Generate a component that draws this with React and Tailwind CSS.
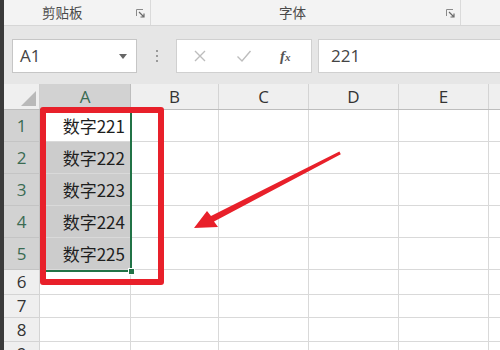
import React from 'react';

const cjk = { fontFamily: '"Noto Sans CJK SC", "Noto Sans", sans-serif' };

const cols = [
  { name: 'A', w: 'w-[91px]' },
  { name: 'B', w: 'w-[88px]' },
  { name: 'C', w: 'w-[90px]' },
  { name: 'D', w: 'w-[90px]' },
  { name: 'E', w: 'w-[90px]' },
];

const rows = [
  { n: 1, h: 'h-[32px]', text: '数字221', sel: true, active: true },
  { n: 2, h: 'h-[32px]', text: '数字222', sel: true },
  { n: 3, h: 'h-[32px]', text: '数字223', sel: true },
  { n: 4, h: 'h-[32px]', text: '数字224', sel: true },
  { n: 5, h: 'h-[32px]', text: '数字225', sel: true },
  { n: 6, h: 'h-[25px]' },
  { n: 7, h: 'h-[23px]' },
  { n: 8, h: 'h-[24px]' },
  { n: 9, h: 'h-[24px]' },
];

// little dialog launcher in the ribbon group labels
const Launcher = () => (
  <svg width="9" height="9" viewBox="0 0 9 9" className="shrink-0">
    <path d="M0.5 7V0.5H7" fill="none" stroke="#8a8a8a" strokeWidth="1" />
    <path d="M3 3L8 8M8 4.5V8H4.5" fill="none" stroke="#6a6a6a" strokeWidth="1.2" />
  </svg>
);

const App = () => {
  return (
    <div className="relative w-[500px] h-[350px] overflow-hidden flex bg-white" style={cjk}>
      {/* dark window edge */}
      <div className="w-[4px] shrink-0 bg-[#3a3a3a]" />

      <div className="flex-1 flex flex-col min-w-0">
        {/* ribbon group labels */}
        <div className="h-[26px] shrink-0 flex bg-[#f3f3f3] border-b border-[#d6d6d6]">
          <div className="w-[147px] flex items-center border-r border-[#dadada]">
            <span className="pl-[38px] text-[13.5px] text-[#4a4a4a]">剪贴板</span>
            <span className="ml-auto mr-[5px] mt-[2px]"><Launcher /></span>
          </div>
          <div className="w-[310px] flex items-center border-r border-[#dadada]">
            <span className="pl-[128px] text-[13.5px] text-[#4a4a4a]">字体</span>
            <span className="ml-auto mr-[5px] mt-[2px]"><Launcher /></span>
          </div>
        </div>

        {/* formula bar */}
        <div className="h-[58px] shrink-0 flex items-start pt-[13px] bg-[#e6e6e6]">
          <div className="ml-[8px] w-[125px] h-[34px] bg-white border border-[#c6c6c6] flex items-center">
            <span className="pl-[7px] text-[17px] text-[#444]" style={{ fontFamily: '"Open Sans", sans-serif' }}>A1</span>
            <span className="ml-auto mr-[9px] w-0 h-0 border-l-[4px] border-r-[4px] border-t-[5px] border-l-transparent border-r-transparent border-t-[#666]" />
          </div>
          <div className="w-[39px] h-[34px] flex flex-col items-center justify-center gap-[3px]">
            <span className="w-[2px] h-[2px] bg-[#9a9a9a]" />
            <span className="w-[2px] h-[2px] bg-[#9a9a9a]" />
            <span className="w-[2px] h-[2px] bg-[#9a9a9a]" />
          </div>
          <div className="w-[136px] h-[34px] bg-white border border-[#d0d0d0] flex items-center">
            <svg width="14" height="14" viewBox="0 0 14 14" className="ml-[16px]">
              <path d="M2 2L12 12M12 2L2 12" stroke="#bdbdbd" strokeWidth="1.4" />
            </svg>
            <svg width="16" height="14" viewBox="0 0 16 14" className="ml-[29px]">
              <path d="M1.5 7.5L6 12L14.5 2" fill="none" stroke="#bdbdbd" strokeWidth="1.4" />
            </svg>
            <span className="ml-[28px] text-[15px] italic font-bold text-[#555]" style={{ fontFamily: '"Liberation Serif", serif' }}>
              f<span className="text-[11px]">x</span>
            </span>
          </div>
          <div className="ml-[6px] flex-1 h-[34px] bg-white border-y border-l border-[#d0d0d0] flex items-center">
            <span className="pl-[12px] text-[17px] text-[#444]" style={{ fontFamily: '"Open Sans", sans-serif' }}>221</span>
          </div>
        </div>

        {/* sheet */}
        <div className="flex-1 flex flex-col">
          {/* column headers */}
          <div className="h-[26px] shrink-0 flex bg-[#efefef] border-b border-[#bdbdbd]">
            <div className="w-[36px] shrink-0 flex items-end justify-end pr-[3px] pb-[3px] border-r border-[#cfcfcf]">
              <svg width="15" height="15" viewBox="0 0 15 15">
                <polygon points="15,0 15,15 0,15" fill="#b9b9b9" />
              </svg>
            </div>
            {cols.map((c) => (
              <div
                key={c.name}
                className={`${c.w} shrink-0 flex items-center justify-center border-r text-[17px] ${
                  c.name === 'A' ? 'bg-[#d2d2d2] text-[#3a6b52] border-[#bdbdbd]' : 'text-[#333] border-[#d4d4d4]'
                }`}
                style={{ fontFamily: '"Open Sans", sans-serif' }}
              >
                {c.name}
              </div>
            ))}
            <div className="flex-1" />
          </div>

          {rows.map((r) => (
            <div key={r.n} className={`${r.h} shrink-0 flex`}>
              <div
                className={`w-[36px] shrink-0 flex items-center justify-center border-r border-b text-[17px] ${
                  r.sel ? 'bg-[#d2d2d2] text-[#3a6b52] border-[#c4c4c4]' : 'bg-[#efefef] text-[#333] border-[#d4d4d4]'
                }`}
                style={{ fontFamily: '"Open Sans", sans-serif' }}
              >
                {r.n}
              </div>
              {cols.map((c) => (
                <div
                  key={c.name}
                  className={`${c.w} shrink-0 flex items-center justify-end pr-[5px] border-r border-b border-[#d9d9d9] text-[17px] text-[#1e1e1e] ${
                    c.name === 'A' && r.sel && !r.active ? 'bg-[#cccccc]' : ''
                  }`}
                >
                  {c.name === 'A' ? r.text : ''}
                </div>
              ))}
              <div className="flex-1 border-b border-[#d9d9d9]" />
            </div>
          ))}
        </div>
      </div>

      {/* selection outline over the range A1:A5 */}
      <div className="absolute left-[40px] top-[109px] w-[92px] h-[163px] border-2 border-[#217346] pointer-events-none" />
      <div className="absolute left-[128px] top-[268px] w-[7px] h-[7px] bg-[#217346] border border-white pointer-events-none" />

      {/* red annotation box */}
      <div className="absolute left-[40px] top-[107px] w-[124px] h-[178px] border-[6px] border-[#e8202a] rounded-[3px] pointer-events-none" />

      {/* red annotation arrow */}
      <svg className="absolute left-0 top-0 pointer-events-none" width="500" height="350" viewBox="0 0 500 350">
        <polygon
          points="194,228 218,227 214,221.5 340.8,154.2 339.4,151.6 211,216 207,211"
          fill="#e8202a"
        />
      </svg>
    </div>
  );
};

export default App;
